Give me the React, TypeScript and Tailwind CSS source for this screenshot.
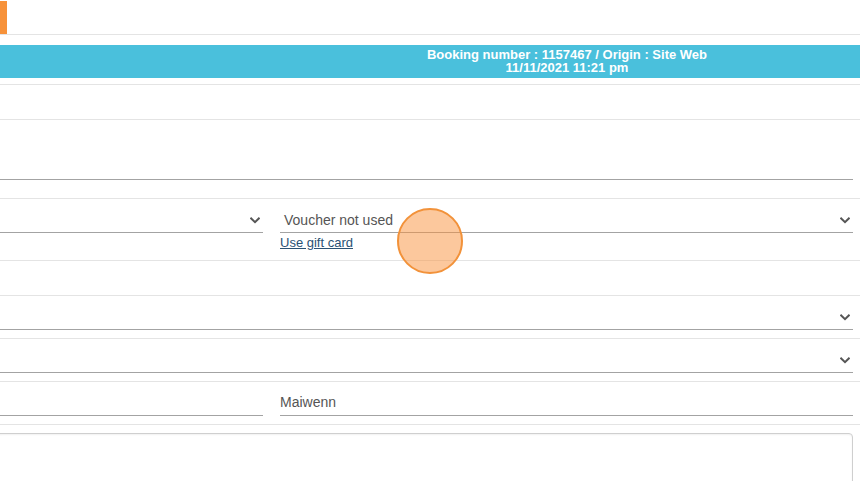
import React from "react";

function Chevron() {
  return (
    <svg width="10" height="7" viewBox="0 0 10 7" className="shrink-0">
      <path d="M1.2 1.4 L5 5.1 L8.8 1.4" fill="none" stroke="#555" strokeWidth="2" strokeLinecap="square" />
    </svg>
  );
}

function SelectField({ text, className = "" }: { text?: string; className?: string }) {
  return (
    <div className={`box-border h-[34px] border-b border-[#a3a3a3] flex items-end pb-[4px] ${className}`}>
      <span className="flex-1 pl-[4px] text-[14px] leading-[16px] text-[#555]">{text}</span>
      <span className="pr-[3px] pb-[4px]">
        <Chevron />
      </span>
    </div>
  );
}

function InputField({ text, className = "" }: { text?: string; className?: string }) {
  return (
    <div className={`box-border h-[34px] border-b border-[#a3a3a3] flex items-end pb-[5px] ${className}`}>
      <span className="text-[14px] leading-[16px] text-[#555]">{text}</span>
    </div>
  );
}

export default function App() {
  return (
    <div
      className="relative w-[860px] h-[481px] overflow-hidden bg-white"
      style={{ fontFamily: '"Liberation Sans", Arial, sans-serif' }}
    >
      {/* header */}
      <div className="h-[35px] pt-[1px] border-b border-[#e4e4e4]">
        <div className="h-[33px] w-[7px] bg-[#f7923a]" />
      </div>

      {/* booking bar */}
      <div className="mt-[10px] h-[33px] bg-[#4ac0dc] pt-[3px] pl-[274px] text-center text-[13px] leading-[13px] font-bold text-white">
        <div>Booking number : 1157467 / Origin : Site Web</div>
        <div>11/11/2021 11:21 pm</div>
      </div>

      <div className="mt-[6px] border-b border-[#e4e4e4]" />

      <div className="pr-[7px]">
        {/* empty row */}
        <div className="h-[35px] border-b border-[#e4e4e4] -mr-[7px]" />

        {/* input row */}
        <div className="h-[79px] border-b border-[#e4e4e4] pt-[26px] -mr-[7px] pr-[7px]">
          <InputField />
        </div>

        {/* voucher row */}
        <div className="h-[62px] border-b border-[#e4e4e4] flex gap-[17px] -mr-[7px] pr-[7px]">
          <div className="w-[263px]">
            <SelectField />
          </div>
          <div className="flex-1">
            <SelectField text="Voucher not used" />
            <a className="block mt-[2px] text-[13px] leading-[15px] text-[#2a5275] underline" href="#">
              Use gift card
            </a>
          </div>
        </div>

        {/* empty row */}
        <div className="h-[35px] border-b border-[#e4e4e4] -mr-[7px]" />

        {/* select rows */}
        <div className="h-[43px] border-b border-[#e4e4e4] -mr-[7px] pr-[7px]">
          <SelectField />
        </div>
        <div className="h-[43px] border-b border-[#e4e4e4] -mr-[7px] pr-[7px]">
          <SelectField />
        </div>

        {/* name row */}
        <div className="h-[43px] border-b border-[#e4e4e4] flex gap-[17px] -mr-[7px] pr-[7px]">
          <div className="w-[263px]">
            <InputField />
          </div>
          <div className="flex-1">
            <InputField text="Maiwenn" />
          </div>
        </div>

        {/* textarea */}
        <div className="mt-[8px] -ml-[4px] h-[80px] rounded-[4px] border border-[#cfcfcf] shadow-[inset_0_1px_2px_rgba(0,0,0,0.06)]" />
      </div>

      {/* click indicator */}
      <div className="absolute left-[397px] top-[208px] w-[66px] h-[66px] rounded-full border-2 border-[#f2923a] bg-[rgba(250,145,60,0.5)]" />
    </div>
  );
}
